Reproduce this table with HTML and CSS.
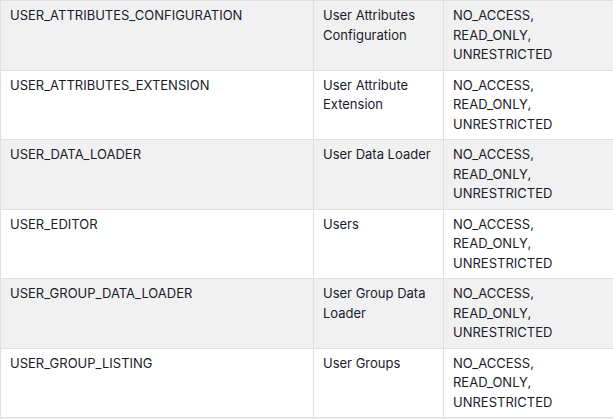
FILE: index.html
```html
<!DOCTYPE html>
<html>
<head>
<meta charset="utf-8">
<link rel="stylesheet" href="styles.css">
</head>
<body>
<table class="perm-table">
  <colgroup>
    <col class="c-key">
    <col class="c-name">
    <col class="c-vals">
  </colgroup>
  <tbody>
    <tr class="shaded">
      <td>USER_ATTRIBUTES_CONFIGURATION</td>
      <td>User Attributes Configuration</td>
      <td>NO_ACCESS,<br>READ_ONLY,<br>UNRESTRICTED</td>
    </tr>
    <tr>
      <td>USER_ATTRIBUTES_EXTENSION</td>
      <td>User Attribute Extension</td>
      <td>NO_ACCESS,<br>READ_ONLY,<br>UNRESTRICTED</td>
    </tr>
    <tr class="shaded">
      <td>USER_DATA_LOADER</td>
      <td>User Data Loader</td>
      <td>NO_ACCESS,<br>READ_ONLY,<br>UNRESTRICTED</td>
    </tr>
    <tr>
      <td>USER_EDITOR</td>
      <td>Users</td>
      <td>NO_ACCESS,<br>READ_ONLY,<br>UNRESTRICTED</td>
    </tr>
    <tr class="shaded">
      <td>USER_GROUP_DATA_LOADER</td>
      <td>User Group Data Loader</td>
      <td>NO_ACCESS,<br>READ_ONLY,<br>UNRESTRICTED</td>
    </tr>
    <tr>
      <td>USER_GROUP_LISTING</td>
      <td>User Groups</td>
      <td>NO_ACCESS,<br>READ_ONLY,<br>UNRESTRICTED</td>
    </tr>
    <tr class="shaded">
      <td></td>
      <td></td>
      <td></td>
    </tr>
  </tbody>
</table>
</body>
</html>
```
FILE: styles.css
```css
html, body {
  margin: 0;
  padding: 0;
  background: #ffffff;
  overflow: hidden;
}

.perm-table {
  border-collapse: collapse;
  table-layout: fixed;
  width: 660px;
  font-family: "Inter", "Noto Sans", sans-serif;
  font-size: 13px;
  line-height: 19.5px;
  color: #1a1b2c;
}

.c-key { width: 313px; }
.c-name { width: 130px; }
.c-vals { width: 217px; }

.perm-table td {
  border: 1px solid #e0e0e0;
  padding: 5px 10px 5px 9px;
  vertical-align: top;
  height: 58.5px;
}

.perm-table tr.shaded td {
  background: #f1f1f1;
}
```
